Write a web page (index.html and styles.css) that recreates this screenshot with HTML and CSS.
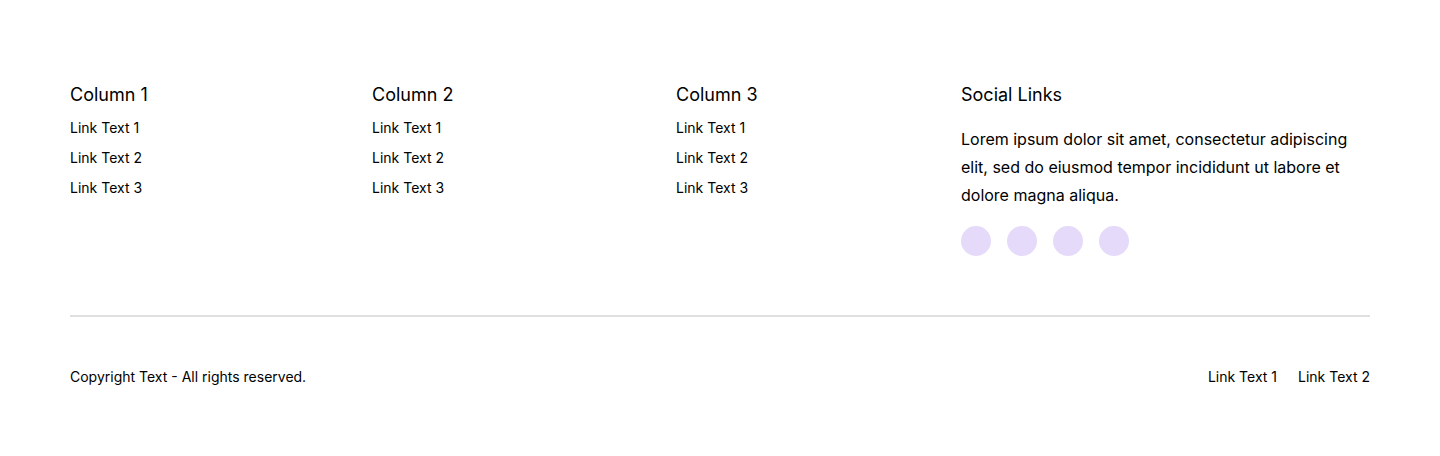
FILE: index.html
```html
<!DOCTYPE html>
<html lang="en">
<head>
    <meta charset="UTF-8">
    <meta name="viewport" content="width=device-width, initial-scale=1.0">
    <title>Footer</title>
    <link rel="stylesheet" href="styles.css">
</head>
<body>
    <footer class="footer">
        <div class="footer-top">
            <div class="footer-col">
                <h4 class="footer-title">Column 1</h4>
                <ul class="footer-links">
                    <li><a href="#">Link Text 1</a></li>
                    <li><a href="#">Link Text 2</a></li>
                    <li><a href="#">Link Text 3</a></li>
                </ul>
            </div>
            <div class="footer-col">
                <h4 class="footer-title">Column 2</h4>
                <ul class="footer-links">
                    <li><a href="#">Link Text 1</a></li>
                    <li><a href="#">Link Text 2</a></li>
                    <li><a href="#">Link Text 3</a></li>
                </ul>
            </div>
            <div class="footer-col">
                <h4 class="footer-title">Column 3</h4>
                <ul class="footer-links">
                    <li><a href="#">Link Text 1</a></li>
                    <li><a href="#">Link Text 2</a></li>
                    <li><a href="#">Link Text 3</a></li>
                </ul>
            </div>
            <div class="footer-col">
                <h4 class="footer-title">Social Links</h4>
                <p class="footer-text">Lorem ipsum dolor sit amet, consectetur adipiscing elit, sed do eiusmod tempor incididunt ut labore et dolore magna aliqua.</p>
                <div class="social-icons">
                    <a href="#" class="social-icon"></a>
                    <a href="#" class="social-icon"></a>
                    <a href="#" class="social-icon"></a>
                    <a href="#" class="social-icon"></a>
                </div>
            </div>
        </div>

        <div class="footer-bottom">
            <p class="copyright">Copyright Text - All rights reserved.</p>
            <div class="bottom-links">
                <a href="#">Link Text 1</a>
                <a href="#">Link Text 2</a>
            </div>
        </div>
    </footer>
</body>
</html>
```

FILE: styles.css
```css
* {
    margin: 0;
    padding: 0;
    box-sizing: border-box;
}

body {
    font-family: Inter, 'Noto Sans', sans-serif;
    background: #ffffff;
    color: #000000;
}

a {
    color: inherit;
    text-decoration: none;
}

.footer {
    padding: 81px 70px 70px;
}

.footer-top {
    display: grid;
    grid-template-columns: 302px 304px 285px 1fr;
    padding-bottom: 59px;
    border-bottom: 2px solid #e0e0e0;
}

.footer-title {
    font-size: 18px;
    font-weight: 400;
    line-height: 27px;
}

.footer-links {
    list-style: none;
    display: flex;
    flex-direction: column;
    gap: 9px;
    margin-top: 9px;
    font-size: 14px;
    line-height: 21px;
}

.footer-text {
    margin-top: 17px;
    font-size: 16px;
    line-height: 28px;
    max-width: 400px;
}

.social-icons {
    display: flex;
    gap: 16px;
    margin-top: 17px;
}

.social-icon {
    width: 30px;
    height: 30px;
    border-radius: 50%;
    background: #e5dafa;
}

.footer-bottom {
    display: flex;
    justify-content: space-between;
    align-items: center;
    padding-top: 49px;
    font-size: 14px;
    line-height: 21px;
}

.bottom-links {
    display: flex;
    gap: 21px;
}
```
